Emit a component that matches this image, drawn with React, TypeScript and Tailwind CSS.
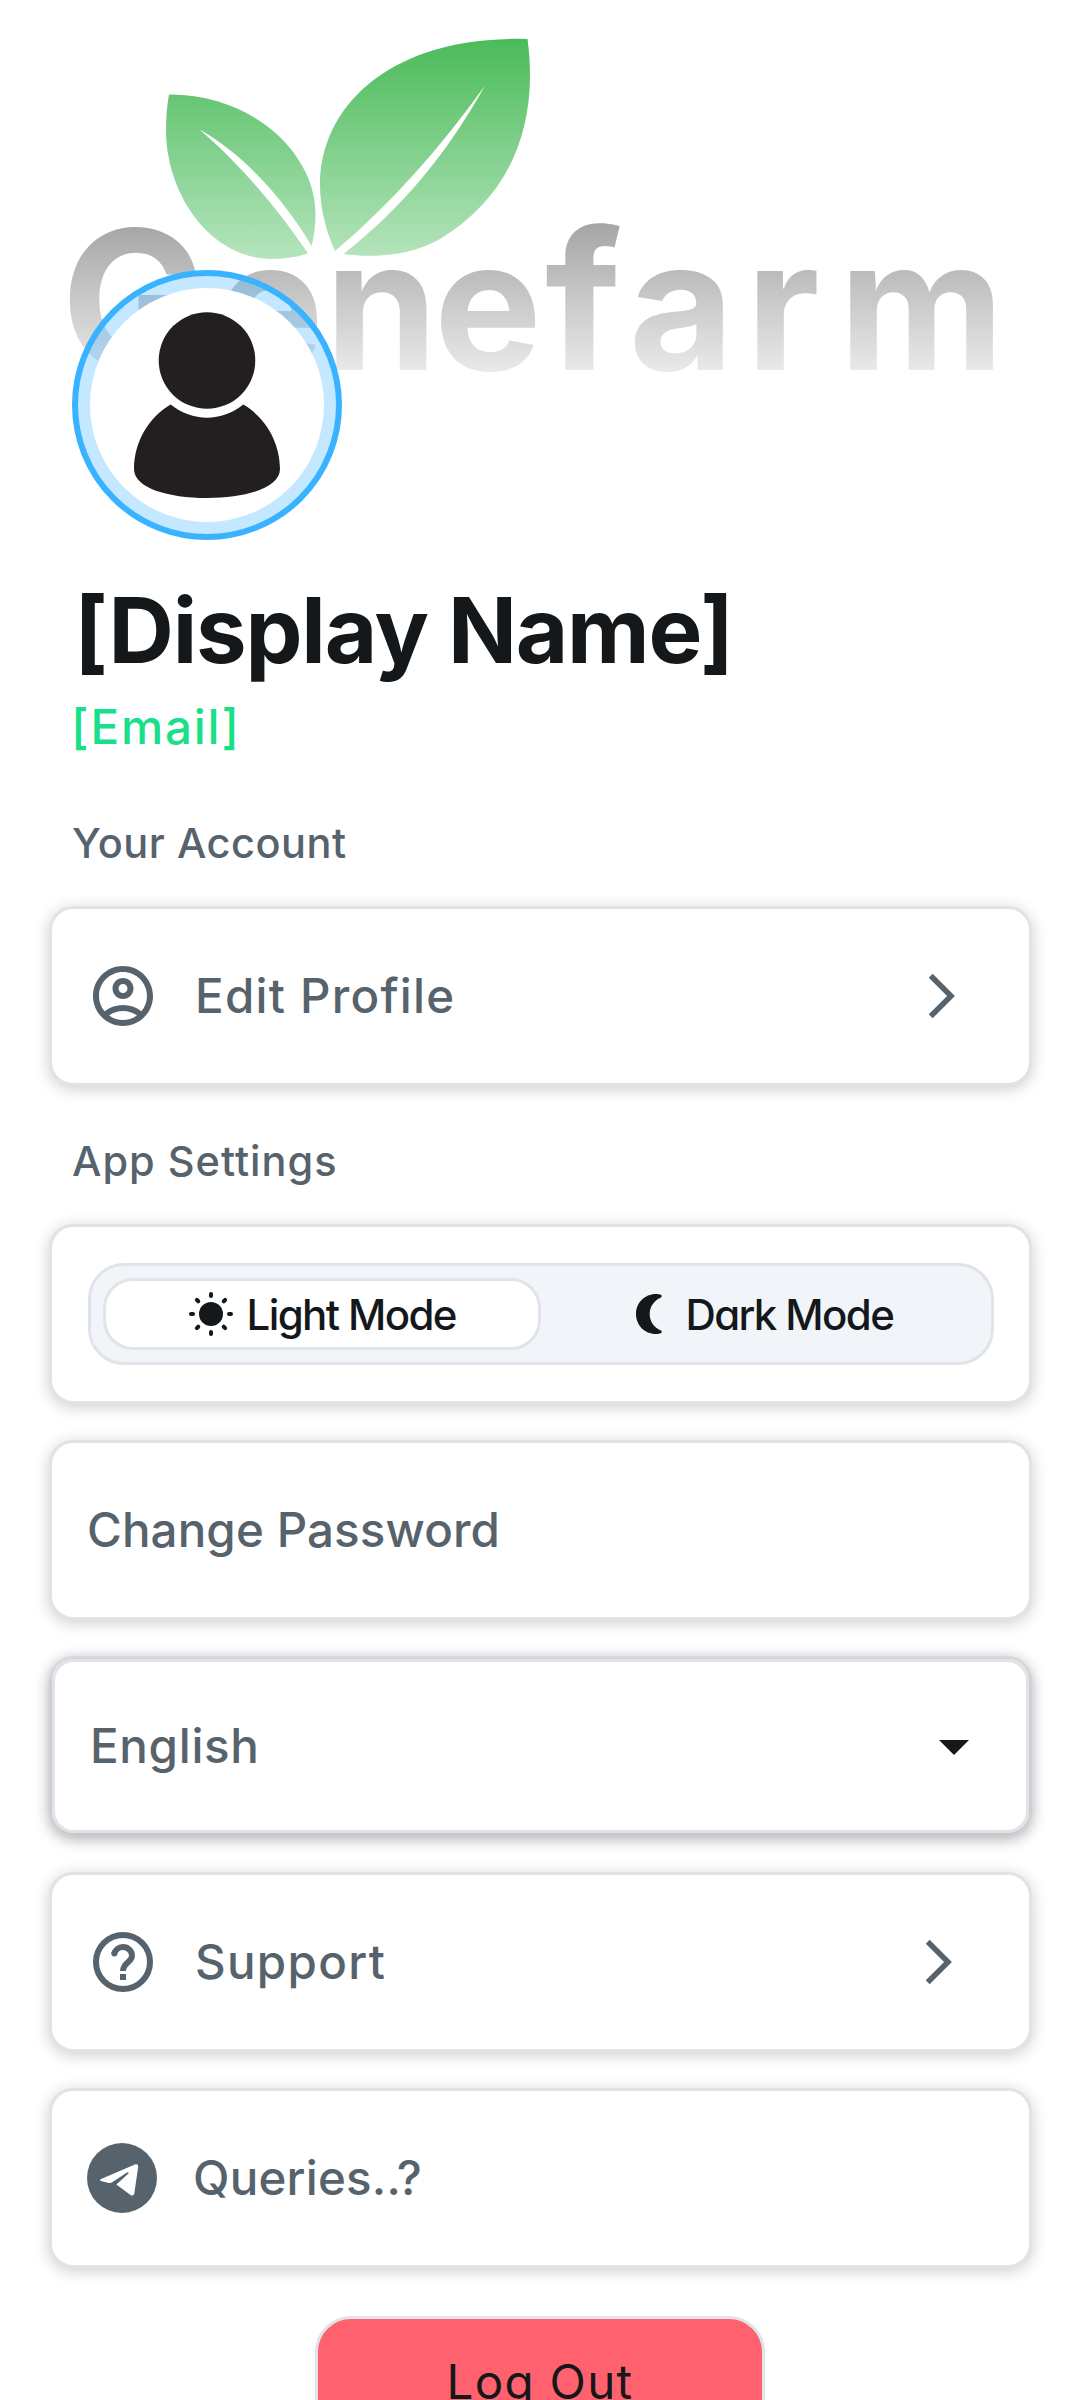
import React from "react";
import { MdOutlineAccountCircle } from "react-icons/md";

function Logo() {
  return (
    <svg className="block h-[390px] w-[1080px] shrink-0" viewBox="0 0 1080 390" aria-label="Genefarm">
      <defs>
        <linearGradient id="leaf" gradientUnits="userSpaceOnUse" x1="0" y1="38" x2="0" y2="259">
          <stop offset="0" stopColor="#4abb59" />
          <stop offset="1" stopColor="#b6e4bd" />
        </linearGradient>
        <linearGradient id="word" gradientUnits="userSpaceOnUse" x1="0" y1="223" x2="0" y2="373">
          <stop offset="0" stopColor="#a5a5a5" />
          <stop offset="1" stopColor="#eaeaea" />
        </linearGradient>
      </defs>
      <path
        fill="url(#leaf)"
        d="M169 94.5C250 93.500 315.500 152 315.500 214C315.500 226 314 237 311.500 246C292 212 252 159 199.500 129.500C240 164 278 209 308 253.500C297 257 284 259 270 259C208 257 166 192 166 130C166 117 167 105 169 94.500Z"
      />
      <path
        fill="url(#leaf)"
        d="M527.500 39C540 132 505 200 440 239C410 256 375 258 343.500 254C402 208 447 154 485 85.500C441 147 392 203 335 251C326 231 320 208 320 185C320 105 392 35 527.500 39Z"
      />
      <g fill="url(#word)" fontFamily="Inter, sans-serif" fontWeight="700" fontSize="181">
        <text x="61" y="370" fontSize="194">G</text>
        <text x="216" y="370">e</text>
        <text x="325" y="370">n</text>
        <text x="434" y="370">e</text>
        <text x="545" y="370" fontSize="192">f</text>
        <text x="629" y="370">a</text>
        <text x="746" y="370">r</text>
        <text x="839" y="370">m</text>
      </g>
    </svg>
  );
}

function Avatar() {
  return (
    <div className="relative -mt-[120px] ml-[72px] size-[270px] shrink-0 rounded-full border-[6px] border-[#39b2ff] bg-[#39b2ff]/30 p-3">
      <svg className="block size-[234px] rounded-full bg-white" viewBox="90 288 234 234">
        <ellipse cx="207" cy="360.500" rx="48.300" ry="48.300" fill="#231f20" />
        <path
          fill="#231f20"
          d="M170.700 404.500C192 422 222 422 243.300 404.500C265 417 280 442 280 469C280 488 246 498 207 498C168 498 134 488 134 469C134 442 149 417 170.700 404.500Z"
        />
      </svg>
    </div>
  );
}

function Card({ className = "", children }: { className?: string; children: React.ReactNode }) {
  return (
    <div
      className={
        "ml-[49px] flex h-[180px] w-[983px] shrink-0 items-center rounded-[24px] border-[3px] border-[#e0e3e7] bg-white shadow-[0_3px_16px_rgba(0,0,0,0.2)] " +
        className
      }
    >
      {children}
    </div>
  );
}

function Chevron({ className = "" }: { className?: string }) {
  return (
    <svg className={"h-12 w-[30px] " + className} viewBox="0 0 30 48" fill="none">
      <path d="M3.700 3.700L24 24L3.700 44.300" stroke="#57636c" strokeWidth="5.500" />
    </svg>
  );
}

function HelpIcon() {
  return (
    <svg className="size-[72px]" viewBox="0 0 24 24" fill="none" stroke="#57636c" strokeWidth="2">
      <circle cx="12" cy="12" r="9" />
      <path d="M9.050 9.400C9.350 8 10.500 7 12 7C13.700 7 15 8.300 15 9.900C15 12 12 12.300 12 15" />
      <circle cx="9.100" cy="9.200" r="1" fill="#57636c" stroke="none" />
      <path d="M11 17h2" />
    </svg>
  );
}

function TelegramIcon() {
  return (
    <svg className="size-[70px]" viewBox="0 0 70 70">
      <circle cx="35" cy="35" r="35" fill="#57636c" />
      <path
        fill="#fff"
        d="M13.500 36.200L48.500 21.300Q51.500 20.500 51.200 23.800L47.300 50.500Q46.600 53.500 43.500 52L29.300 41.500L41.500 30.500Q42 28.500 40 29.500L25.500 39Q23.500 40.400 21 39.700L14 38Q12.200 37.200 13.500 36.200Z"
      />
    </svg>
  );
}

const rays = [0, 45, 90, 135, 180, 225, 270, 315];

function SunIcon() {
  return (
    <svg className="size-11" viewBox="-22 -22 44 44" fill="#14181b">
      <circle r="12" />
      {rays.map((a) => (
        <rect key={a} x="-2" y="-22" width="4" height="6" rx="2" transform={`rotate(${a})`} />
      ))}
    </svg>
  );
}

function MoonIcon() {
  return (
    <svg className="h-10 w-[26px]" viewBox="0 0 26 40" fill="#14181b">
      <path d="M20 0C22 0 23.500 .3 24.800 .7C26 1.200 26 2.800 25 3.400C18 6.500 13.700 12.500 13.700 20C13.700 27.500 18 33.500 25 36.600C26 37.200 26 38.800 24.800 39.300C23.500 39.700 22 40 20 40C8.500 40 0 31 0 20C0 9 8.500 0 20 0Z" />
    </svg>
  );
}

const rowText = "text-[47.500px] font-medium leading-[60px] text-[#57636c] whitespace-nowrap";
const sectionText = "ml-[72px] text-[41.500px] font-medium leading-[54px] text-[#57636c] whitespace-nowrap";

export default function App() {
  return (
    <main className="flex h-[2400px] w-[1080px] flex-col overflow-hidden bg-white font-['Inter',sans-serif]">
      <Logo />
      <Avatar />
      <h1 className="mt-[35px] ml-[74px] shrink-0 text-[90.500px] leading-[110px] font-bold tracking-[-1.200px] whitespace-nowrap text-[#14181b]">
        [Display Name]
      </h1>
      <p className="mt-[12px] ml-[71px] shrink-0 text-[47.500px] leading-[60px] font-medium tracking-[1.800px] whitespace-nowrap text-[#1adf8a]">
        [Email]
      </p>
      <h2 className={"mt-[59px] shrink-0 tracking-[0.500px] " + sectionText}>Your Account</h2>
      <Card className="mt-[36px] pl-[35px]">
        <MdOutlineAccountCircle className="size-[72px]" color="#57636c" />
        <span className={"ml-[36px] tracking-[1.250px] " + rowText}>Edit Profile</span>
        <Chevron className="mr-[72px] ml-auto" />
      </Card>
      <h2 className={"mt-[48px] shrink-0 tracking-[1px] " + sectionText}>App Settings</h2>
      <Card className="mt-[36px] justify-center">
        <div className="flex h-[102px] w-[906px] items-center rounded-[36px] border-[3px] border-[#e0e3e7] bg-[#f1f4f8] p-3 text-[42px] font-medium tracking-[-1.600px] text-[#14181b] [font-feature-settings:'cv11']">
          <div className="flex h-[72px] w-[438px] items-center rounded-[30px] border-[3px] border-[#e0e3e7] bg-white pl-[83px]">
            <SunIcon />
            <span className="ml-[14px] whitespace-nowrap">Light Mode</span>
          </div>
          <div className="flex flex-1 items-center pl-[95px]">
            <MoonIcon />
            <span className="ml-[24px] whitespace-nowrap">Dark Mode</span>
          </div>
        </div>
      </Card>
      <Card className="mt-[36px] pl-[35px]">
        <span className={"tracking-[0.100px] " + rowText}>Change Password</span>
      </Card>
      <Card className="mt-[36px]">
        <div className="flex h-[174px] w-[977px] items-center rounded-[22px] border-[3px] border-[#e0e3e7] bg-white pl-[35px] shadow-[0_3px_16px_rgba(0,0,0,0.2)]">
          <span className={"tracking-[0.700px] " + rowText}>English</span>
          <svg className="mt-[2px] mr-[57px] ml-auto h-[15px] w-[30px]" viewBox="0 0 30 15">
            <path d="M0 0H30L15 15Z" fill="#14181b" />
          </svg>
        </div>
      </Card>
      <Card className="mt-[36px] pl-[35px]">
        <HelpIcon />
        <span className={"ml-[36px] tracking-[1.300px] " + rowText}>Support</span>
        <Chevron className="mr-[75px] ml-auto" />
      </Card>
      <Card className="mt-[36px] pl-[35px]">
        <TelegramIcon />
        <span className={"ml-[36px] tracking-[0.200px] " + rowText}>Queries..?</span>
      </Card>
      <button className="mt-[48px] ml-[315px] h-[132px] w-[450px] shrink-0 rounded-[36px] border-[3px] border-[#e0e3e7] bg-[#ff626e] text-[47.500px] leading-[60px] tracking-[1.300px] text-[#14181b]">
        Log Out
      </button>
    </main>
  );
}
